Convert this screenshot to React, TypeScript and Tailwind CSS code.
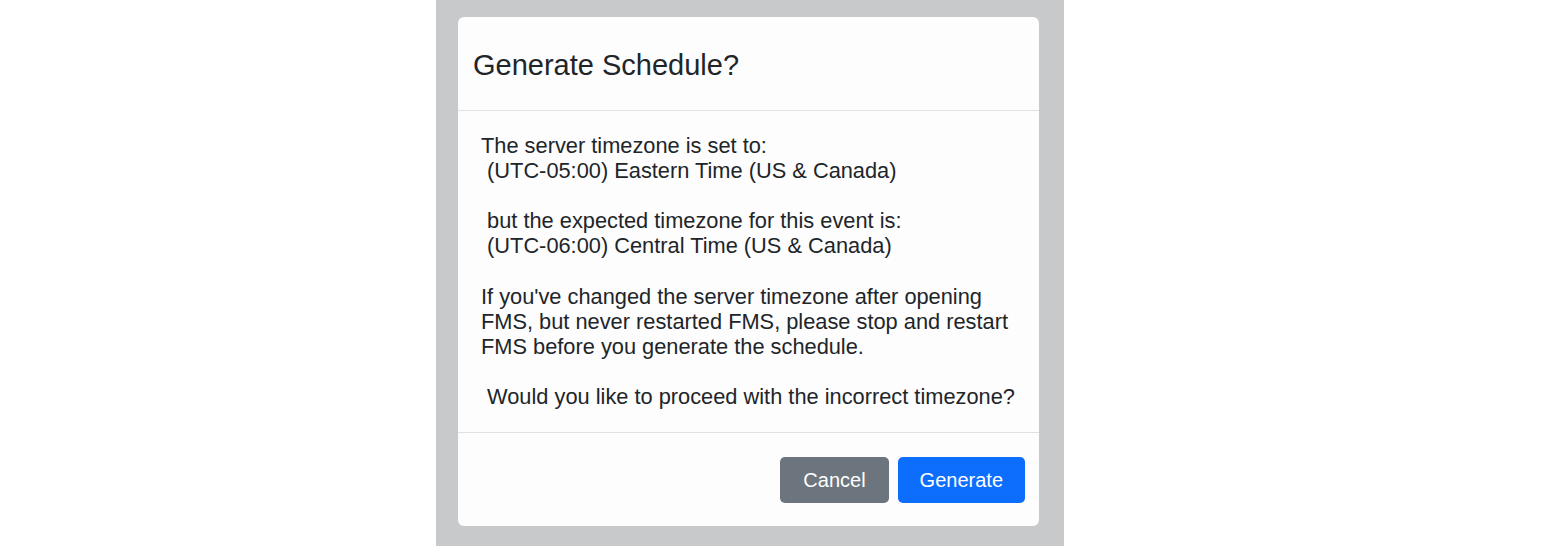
import React from "react";

const bodyText =
  "The server timezone is set to:\n (UTC-05:00) Eastern Time (US & Canada)\n\n but the expected timezone for this event is:\n (UTC-06:00) Central Time (US & Canada)\n\nIf you've changed the server timezone after opening FMS, but never restarted FMS, please stop and restart FMS before you generate the schedule.\n\n Would you like to proceed with the incorrect timezone?";

export default function App() {
  return (
    <div
      className="w-full h-[546px] bg-white flex"
      style={{ fontFamily: '"Liberation Sans", Arial, sans-serif' }}
    >
      <div className="ml-[436px] w-[628px] h-full bg-[#c8c9cb] pt-[17px] pl-[22px] pr-[25px] pb-[20px]">
        <div className="w-[581px] h-[509px] bg-[#fdfdfd] rounded-[6px] flex flex-col text-[#212529]">
          <div className="h-[94px] flex items-center pt-[4px] px-[15px] border-b border-[#dee2e6]">
            <h4 className="text-[29px] leading-[35px] font-normal">Generate Schedule?</h4>
          </div>
          <div className="pt-[22px] px-[23px] h-[322px] border-b border-[#dee2e6]">
            <p className="text-[21.8px] leading-[25.1px] whitespace-pre-wrap">{bodyText}</p>
          </div>
          <div className="flex justify-end gap-[9px] pt-[24px] pr-[14px]">
            <button className="h-[46px] px-[23px] text-[20px] text-white bg-[#6c757d] rounded-[5px]">
              Cancel
            </button>
            <button className="h-[46px] px-[22px] text-[20px] text-white bg-[#0d6efd] rounded-[5px]">
              Generate
            </button>
          </div>
        </div>
      </div>
    </div>
  );
}
